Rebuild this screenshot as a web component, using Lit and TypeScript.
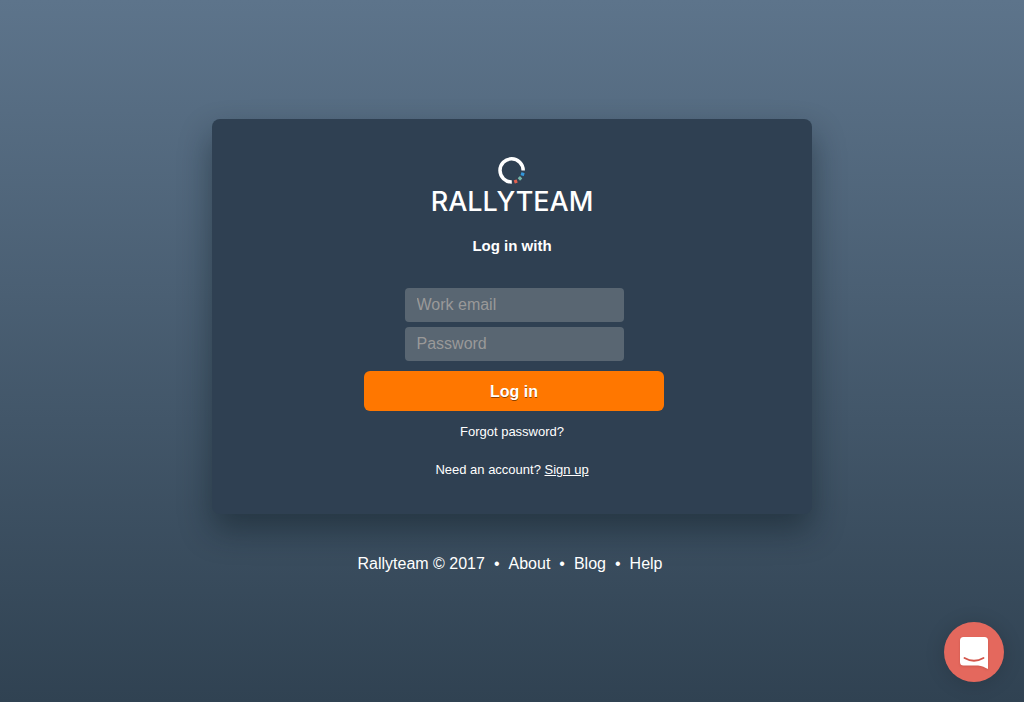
import { LitElement, html, css, svg } from "lit";
import { customElement } from "lit/decorators.js";

@customElement("rally-logo")
class RallyLogo extends LitElement {
  static styles = css`
    :host {
      display: flex;
      flex-direction: column;
      align-items: center;
      color: #fff;
    }
    .ring {
      display: block;
      width: 28px;
      height: 28px;
    }
    .name {
      font: 500 27px/34px Inter, "Open Sans", sans-serif;
    }
  `;

  render() {
    const dots = [
      { x: 24.6, y: 17.2, angle: 17, fill: "#3498db" },
      { x: 22, y: 21.4, angle: 45, fill: "#76b5a9" },
      { x: 17.7, y: 24.4, angle: 73, fill: "#e0604f" },
    ];
    return html`
      <svg class="ring" viewBox="0 0 28 28" aria-hidden="true">
        <path d="M13.8 25A11.600 11.600 0 1 1 25.200 13.400" fill="none" stroke="#fff" stroke-width="3.500" />
        ${dots.map(
          (d) => svg`<rect x=${d.x - 1.7} y=${d.y - 1.6} width="3.4" height="3.2" rx=".4" fill=${d.fill}
            transform="rotate(${d.angle} ${d.x} ${d.y})" />`
        )}
      </svg>
      <span class="name">RALLYTEAM</span>
    `;
  }
}

@customElement("chat-launcher")
class ChatLauncher extends LitElement {
  static styles = css`
    .launcher {
      display: block;
      width: 60px;
      height: 60px;
      padding: 0;
      border: 0;
      border-radius: 50%;
      background: #e4685d;
      box-shadow: 0 2px 20px rgba(0, 0, 0, 0.15);
      cursor: pointer;
    }
    .glyph {
      display: block;
      width: 60px;
      height: 60px;
      filter: drop-shadow(0 1px 1px rgba(110, 20, 10, 0.2));
    }
  `;

  render() {
    return html`
      <button class="launcher" type="button" aria-label="Open chat">
        <svg class="glyph" viewBox="0 0 60 60" aria-hidden="true">
          <path
            d="M19.500 15H40.500A3.500 3.500 0 0 1 44 18.500V47C41 45.800 38 43.500 34 43.500H19.500A3.500 3.500 0 0 1 16 40V18.500A3.500 3.500 0 0 1 19.500 15Z"
            fill="#fff"
          />
          <path
            d="M20.500 36Q30 41.500 39.500 36"
            fill="none"
            stroke="#d3564b"
            stroke-width="1.900"
            stroke-linecap="round"
          />
        </svg>
      </button>
    `;
  }
}

@customElement("app-root")
class AppRoot extends LitElement {
  static styles = css`
    :host {
      display: flex;
      flex-direction: column;
      align-items: center;
      box-sizing: border-box;
      min-height: 100vh;
      padding: 119px 16px 32px;
      background: linear-gradient(#5d748b, #304252);
      color: #fff;
      font: 16px/20px "Liberation Sans", Arial, sans-serif;
    }
    a {
      color: inherit;
      text-decoration: none;
    }
    .card {
      display: flex;
      flex-direction: column;
      align-items: center;
      box-sizing: border-box;
      width: 100%;
      max-width: 600px;
      padding: 38px 16px 33px;
      border-radius: 8px;
      background: #2f4052;
      box-shadow: 0 16px 32px rgba(10, 25, 30, 0.45);
    }
    .title {
      margin: 17px 0 32px;
      font-size: 15px;
      line-height: 20px;
    }
    .form {
      display: flex;
      flex-direction: column;
      align-items: center;
      width: 100%;
      max-width: 300px;
      padding-left: 4px;
    }
    .field {
      box-sizing: border-box;
      width: 219px;
      height: 34px;
      margin: 0 0 5px;
      padding: 0 12px;
      border: 0;
      border-radius: 4px;
      background: #596672;
      color: #fff;
      font: inherit;
    }
    .field::placeholder {
      color: #999;
      opacity: 1;
    }
    .submit {
      width: 100%;
      height: 40px;
      margin: 5px 0 10px;
      padding: 2px 6px 0;
      border: 0;
      border-radius: 6px;
      background: #ff7700;
      color: #fff;
      font: bold 16px/20px "Liberation Sans", Arial, sans-serif;
      text-shadow: 0 1px 0 rgba(0, 0, 0, 0.45);
      cursor: pointer;
    }
    .note {
      margin: 0;
      font-size: 13px;
      line-height: 22px;
    }
    .note + .note {
      margin-top: 16px;
    }
    .signup {
      text-decoration: underline;
    }
    .footer {
      display: flex;
      flex-wrap: wrap;
      justify-content: center;
      gap: 9px;
      margin-top: 40px;
      padding-right: 4px;
    }
    .chat {
      position: fixed;
      right: 20px;
      bottom: 20px;
    }
  `;

  render() {
    const links = ["About", "Blog", "Help"];
    return html`
      <main class="card">
        <rally-logo></rally-logo>
        <h1 class="title">Log in with</h1>
        <form class="form" @submit=${(e: Event) => e.preventDefault()}>
          <input class="field" type="email" placeholder="Work email" aria-label="Work email" />
          <input class="field" type="password" placeholder="Password" aria-label="Password" />
          <button class="submit" type="submit">Log in</button>
        </form>
        <p class="note"><a href="#forgot">Forgot password?</a></p>
        <p class="note">Need an account? <a class="signup" href="#signup">Sign up</a></p>
      </main>
      <footer class="footer">
        <span>Rallyteam © 2017</span>
        ${links.map((name) => html`<span>•</span><a href="#${name.toLowerCase()}">${name}</a>`)}
      </footer>
      <chat-launcher class="chat"></chat-launcher>
    `;
  }
}
